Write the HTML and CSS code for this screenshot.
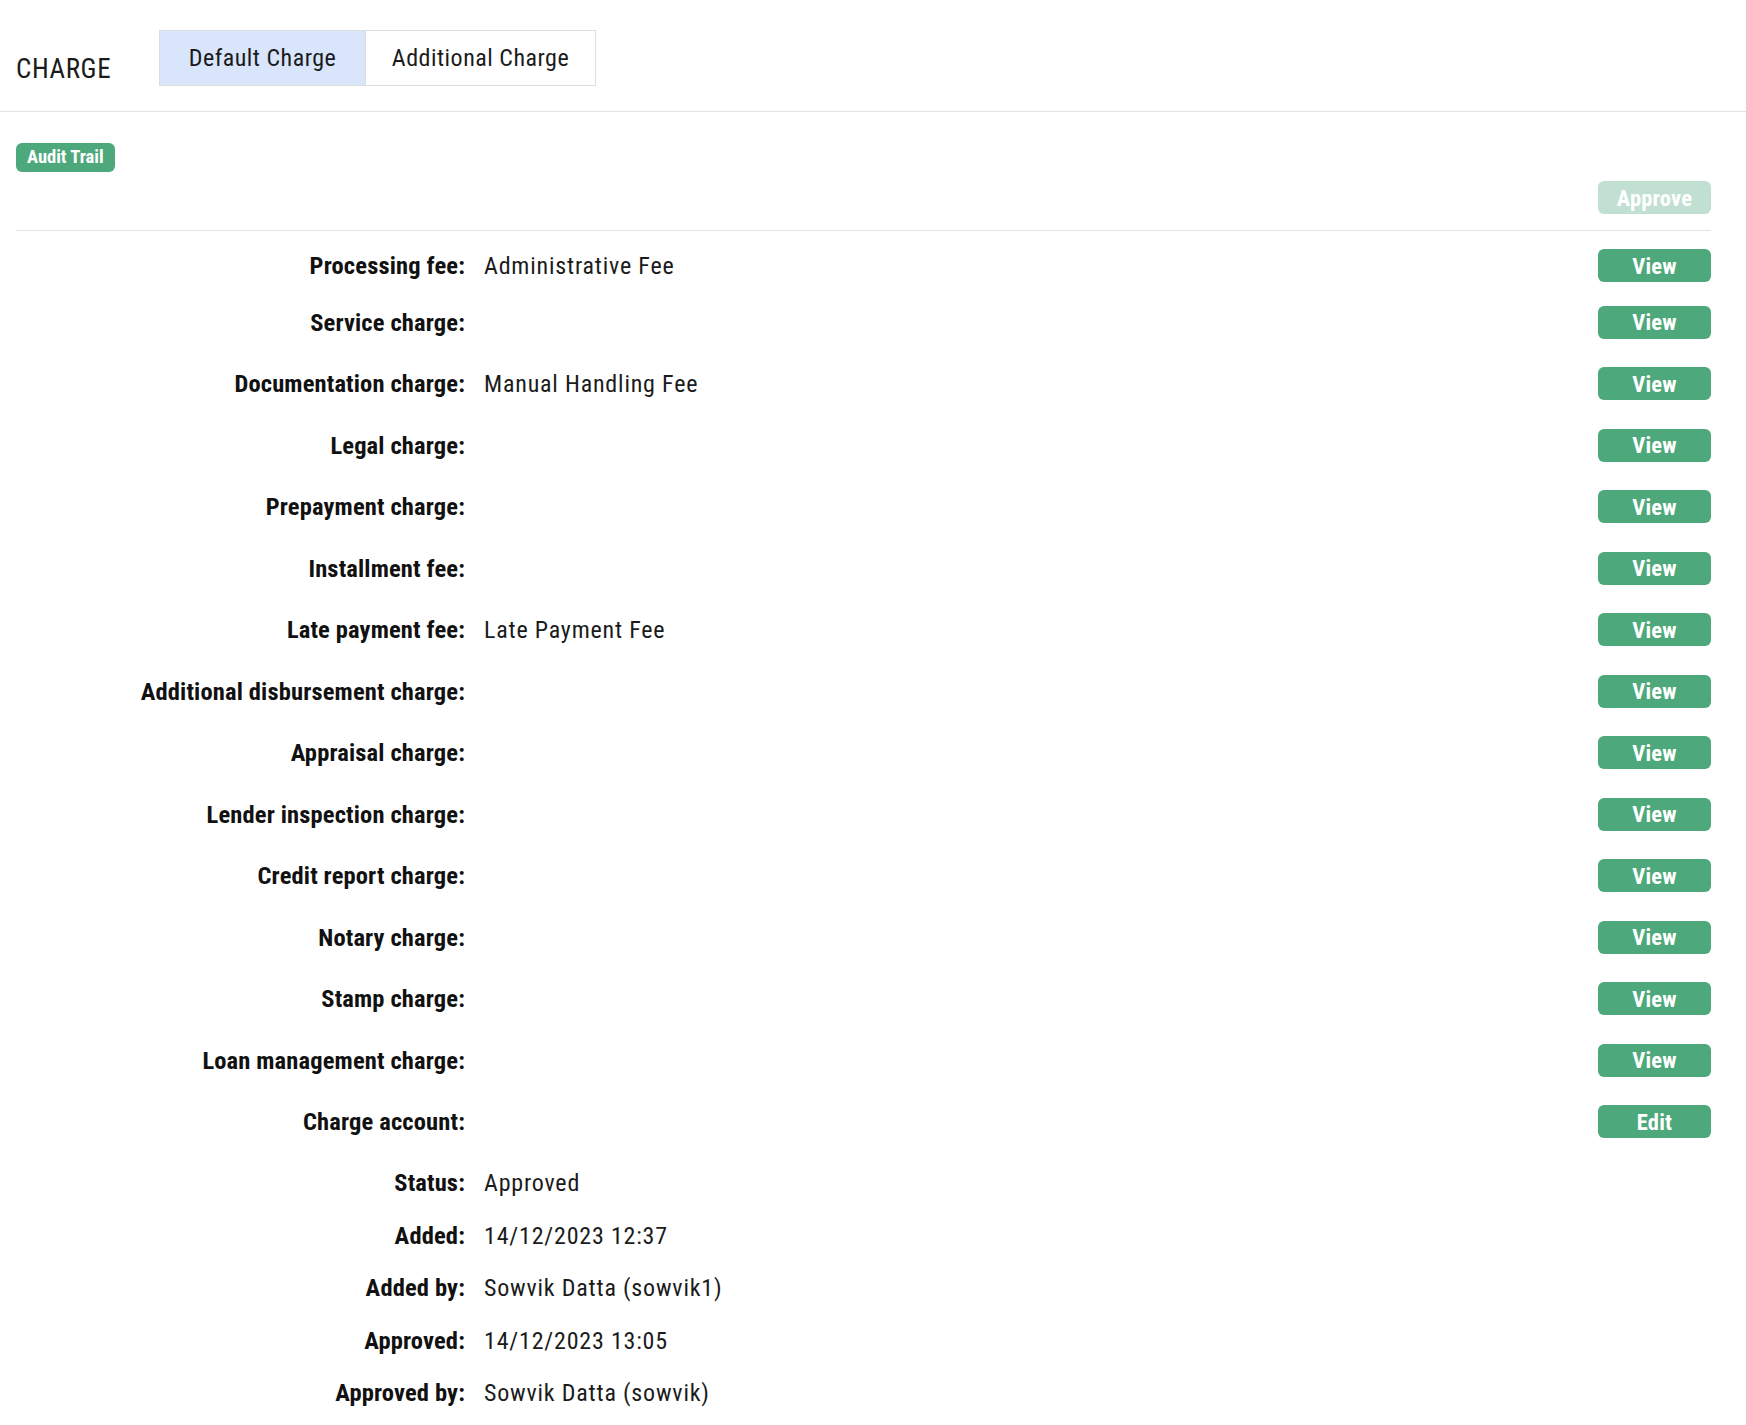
FILE: index.html
```html
<!DOCTYPE html>
<html lang="en">
<head>
    <meta charset="UTF-8">
    <title>Charge</title>
    <link rel="stylesheet" href="styles.css">
</head>
<body>
    <div class="header">
        <h2 class="title">CHARGE</h2>
        <div class="tabs">
            <a class="tab active">Default Charge</a>
            <a class="tab">Additional Charge</a>
        </div>
    </div>

    <div class="content">
        <span class="badge">Audit Trail</span>
        <div class="actions">
            <button class="btn disabled">Approve</button>
        </div>

        <div class="charges">
            <div class="row"><span class="label">Processing fee:</span><span class="value">Administrative Fee</span><button class="btn">View</button></div>
            <div class="row"><span class="label">Service charge:</span><span class="value"></span><button class="btn">View</button></div>
            <div class="row"><span class="label">Documentation charge:</span><span class="value">Manual Handling Fee</span><button class="btn">View</button></div>
            <div class="row"><span class="label">Legal charge:</span><span class="value"></span><button class="btn">View</button></div>
            <div class="row"><span class="label">Prepayment charge:</span><span class="value"></span><button class="btn">View</button></div>
            <div class="row"><span class="label">Installment fee:</span><span class="value"></span><button class="btn">View</button></div>
            <div class="row"><span class="label">Late payment fee:</span><span class="value">Late Payment Fee</span><button class="btn">View</button></div>
            <div class="row"><span class="label">Additional disbursement charge:</span><span class="value"></span><button class="btn">View</button></div>
            <div class="row"><span class="label">Appraisal charge:</span><span class="value"></span><button class="btn">View</button></div>
            <div class="row"><span class="label">Lender inspection charge:</span><span class="value"></span><button class="btn">View</button></div>
            <div class="row"><span class="label">Credit report charge:</span><span class="value"></span><button class="btn">View</button></div>
            <div class="row"><span class="label">Notary charge:</span><span class="value"></span><button class="btn">View</button></div>
            <div class="row"><span class="label">Stamp charge:</span><span class="value"></span><button class="btn">View</button></div>
            <div class="row"><span class="label">Loan management charge:</span><span class="value"></span><button class="btn">View</button></div>
            <div class="row"><span class="label">Charge account:</span><span class="value"></span><button class="btn">Edit</button></div>
        </div>

        <div class="info">
            <div class="row"><span class="label">Status:</span><span class="value">Approved</span></div>
            <div class="row"><span class="label">Added:</span><span class="value">14/12/2023 12:37</span></div>
            <div class="row"><span class="label">Added by:</span><span class="value">Sowvik Datta (sowvik1)</span></div>
            <div class="row"><span class="label">Approved:</span><span class="value">14/12/2023 13:05</span></div>
            <div class="row"><span class="label">Approved by:</span><span class="value">Sowvik Datta (sowvik)</span></div>
        </div>
    </div>
</body>
</html>
```
FILE: styles.css
```css
* { margin: 0; padding: 0; box-sizing: border-box; }

body {
    font-family: "Roboto Condensed", Roboto, sans-serif;
    color: #1b1b1b;
    background: #fff;
}

.header {
    display: flex;
    align-items: flex-start;
    padding: 30px 0 25px 16px;
    border-bottom: 1px solid #e3e3e3;
}

.title {
    width: 143px;
    margin-top: 23px;
    font-size: 27px;
    line-height: 32px;
    font-weight: 400;
    letter-spacing: 0.6px;
}

.tabs {
    display: flex;
    border: 1px solid #dedede;
}

.tab {
    height: 54px;
    display: flex;
    align-items: center;
    font-size: 24px;
    letter-spacing: 0.5px;
    color: #1b1b1b;
}
.tab:first-child { width: 205px; justify-content: center; }
.tab:last-child { width: 230px; justify-content: center; border-left: 1px solid #dedede; }
.tab.active { background: #d8e5fb; }

.content {
    padding: 0 35px 20px 16px;
}

.badge {
    display: inline-block;
    margin-top: 31px;
    height: 29px;
    line-height: 29px;
    padding: 0 11px;
    border-radius: 6px;
    background: #4da97b;
    color: #fff;
    font-size: 18.5px;
    font-weight: 700;
    letter-spacing: 0;
    vertical-align: top;
}

.actions {
    display: flex;
    justify-content: flex-end;
    margin-top: 9px;
    padding-bottom: 16px;
    border-bottom: 1px solid #e3e3e3;
}

.btn {
    width: 113px;
    height: 33px;
    border: none;
    border-radius: 6px;
    background: #4da97b;
    color: #fff;
    font-family: inherit;
    font-size: 22.5px;
    font-weight: 700;
    letter-spacing: 0.2px;
}
.btn.disabled { background: #c2e0d2; }

.charges {
    display: flex;
    flex-direction: column;
    gap: 28.5px;
    margin-top: 18px;
}
.charges .row:first-child { margin-bottom: -5px; }

.row {
    display: grid;
    grid-template-columns: 449px 1fr 113px;
    column-gap: 19px;
    align-items: center;
    font-size: 24px;
}

.label {
    text-align: right;
    font-size: 24.5px;
    font-weight: 700;
    letter-spacing: 0.15px;
    color: #111;
}

.value {
    letter-spacing: 0.8px;
    color: #1b1b1b;
}

.info {
    display: flex;
    flex-direction: column;
    gap: 28px;
    margin-top: 33px;
}
.info .row {
    grid-template-columns: 449px 1fr;
    line-height: 24.5px;
}
```
